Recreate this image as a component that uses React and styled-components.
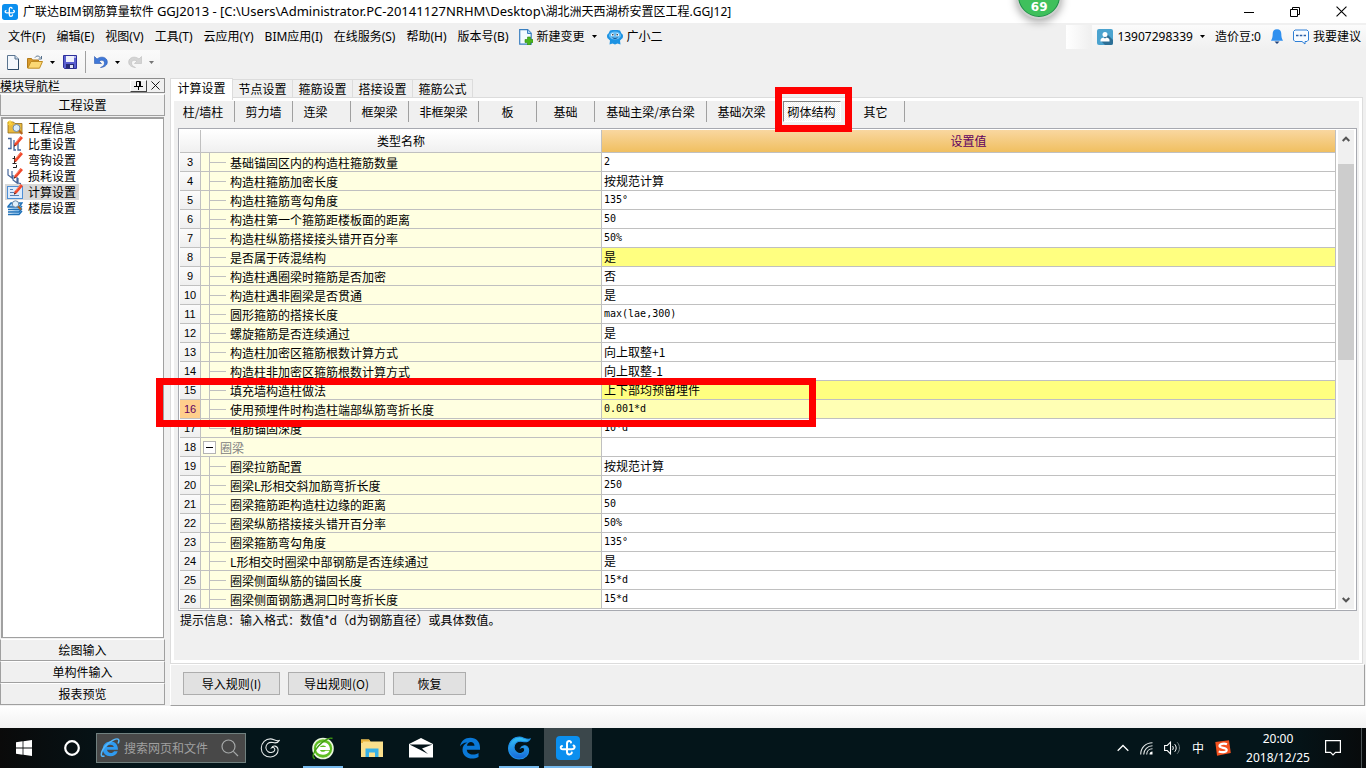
import React, { useState } from 'react'
import styled, { createGlobalStyle } from 'styled-components'

const menus = ['文件(F)', '编辑(E)', '视图(V)', '工具(T)', '云应用(Y)', 'BIM应用(I)', '在线服务(S)', '帮助(H)', '版本号(B)']

const mainTabs = ['计算设置', '节点设置', '箍筋设置', '搭接设置', '箍筋公式']

const memberTabs = [
  { name: '柱/墙柱', width: 57, space: '6px' },
  { name: '剪力墙' },
  { name: '连梁', space: '12px' },
  { name: '框架梁' },
  { name: '非框架梁', width: 70 },
  { name: '板' },
  { name: '基础' },
  { name: '基础主梁/承台梁', width: 112 },
  { name: '基础次梁', width: 70 },
  { name: '砌体结构', width: 70, marked: true },
  { name: '其它' },
]

const rows = [
  { no: 3, name: '基础锚固区内的构造柱箍筋数量', value: '2' },
  { no: 4, name: '构造柱箍筋加密长度', value: '按规范计算' },
  { no: 5, name: '构造柱箍筋弯勾角度', value: '135°' },
  { no: 6, name: '构造柱第一个箍筋距楼板面的距离', value: '50' },
  { no: 7, name: '构造柱纵筋搭接接头错开百分率', value: '50%' },
  { no: 8, name: '是否属于砖混结构', value: '是', color: '#ffff80' },
  { no: 9, name: '构造柱遇圈梁时箍筋是否加密', value: '否' },
  { no: 10, name: '构造柱遇非圈梁是否贯通', value: '是' },
  { no: 11, name: '圆形箍筋的搭接长度', value: 'max(lae,300)' },
  { no: 12, name: '螺旋箍筋是否连续通过', value: '是' },
  { no: 13, name: '构造柱加密区箍筋根数计算方式', value: '向上取整+1' },
  { no: 14, name: '构造柱非加密区箍筋根数计算方式', value: '向上取整-1' },
  { no: 15, name: '填充墙构造柱做法', value: '上下部均预留埋件', color: '#ffff80' },
  { no: 16, name: '使用预埋件时构造柱端部纵筋弯折长度', value: '0.001*d', color: '#ffffb4', current: true },
  { no: 17, name: '植筋锚固深度', value: '10*d', last: true },
  { no: 18, name: '圈梁', value: '', group: true },
  { no: 19, name: '圈梁拉筋配置', value: '按规范计算' },
  { no: 20, name: '圈梁L形相交斜加筋弯折长度', value: '250' },
  { no: 21, name: '圈梁箍筋距构造柱边缘的距离', value: '50' },
  { no: 22, name: '圈梁纵筋搭接接头错开百分率', value: '50%' },
  { no: 23, name: '圈梁箍筋弯勾角度', value: '135°' },
  { no: 24, name: 'L形相交时圈梁中部钢筋是否连续通过', value: '是' },
  { no: 25, name: '圈梁侧面纵筋的锚固长度', value: '15*d' },
  { no: 26, name: '圈梁侧面钢筋遇洞口时弯折长度', value: '15*d' },
]

const isLatin = (text) => /^[\x20-\xff]*$/.test(text)

/* ---------- icons ---------- */

const AppIcon = ({ size }) => (
  <svg width={size} height={size} viewBox="0 0 24 24">
    <rect width="24" height="24" rx="4" fill="#0b8fef" />
    <path d="M15 6.500c-.3-2.300-4-2-4 1v8.500c0 3.200 4.500 3 4.800.5M6 10c-2 .6-1.700 3.200.8 3.200h9c3 0 3.600-2.800 1.700-3.700" fill="none" stroke="#fff" strokeWidth="2" strokeLinecap="round" />
  </svg>
)

const NewFileIcon = () => (
  <svg width="12" height="15" viewBox="0 0 12 15">
    <path d="M.5.5h7.500l3.500 3.500v10.500H.5z" fill="#f4f8fd" stroke="#5b7590" />
    <path d="M11.500 4v10.500H1" fill="none" stroke="#2d4a68" />
    <path d="M8 .5V4h3.500" fill="#c9d9ea" stroke="#5b7590" />
  </svg>
)

const OpenIcon = () => (
  <svg width="16" height="14" viewBox="0 0 16 14">
    <path d="M.5 13V3.500h4l1 1.500h6v3" fill="#d99a2b" stroke="#b27a1a" />
    <path d="M.8 13.200 4 6.500h11.500l-3 6.700z" fill="#fbd873" stroke="#c08c22" />
    <path d="M8 2.500c1.500-2 4-2 5.500.5M14.500 1v3h-3" fill="none" stroke="#55708c" />
  </svg>
)

const SaveIcon = () => (
  <svg width="14" height="14" viewBox="0 0 14 14">
    <path d="M.5.5h13v13h-12l-1-1z" fill="#5a5fd0" stroke="#2c2f9a" />
    <rect x="3" y="1" width="8" height="6" fill="#eef0fb" />
    <rect x="11.500" y="1" width="1" height="2" fill="#fff" />
    <rect x="3" y="9" width="8" height="4.500" fill="#262a75" />
    <rect x="7" y="10" width="3" height="3" fill="#e3e5f5" />
  </svg>
)

const UndoIcon = ({ color, light, flip }) => (
  <svg width="14" height="14" viewBox="0 0 14 14">
    <g transform={flip ? 'translate(14 0) scale(-1 1)' : undefined}>
      <path d="M.5 1.500v7h7l-2.300-2.300c2.600-2 5.300-.6 5.300 1.800 0 2-1.500 3.500-4 4.500 4-.3 6.800-2.200 6.800-5.500 0-4.800-6.300-6.500-10.300-3z" fill={color} stroke={light} strokeWidth=".6" />
    </g>
  </svg>
)

const Caret = ({ color = '#000' }) => (
  <svg width="5" height="3" viewBox="0 0 5 3"><path d="M0 0h5L2.500 3z" fill={color} /></svg>
)

const NewChangeIcon = () => (
  <svg width="14" height="16" viewBox="0 0 14 16">
    <path d="M.7.7h8l3.500 3.500v11H.7z" fill="#f4fafe" stroke="#3a7fc0" strokeWidth="1.200" />
    <path d="M8.500.7V4.500h3.700" fill="#a9d2f3" stroke="#3a7fc0" />
    <path d="M8.500 8h3v2.500H14v3h-2.500V16h-3v-2.500H6v-3h2.500z" fill="#4bb51c" stroke="#2d8a0c" strokeWidth=".6" />
  </svg>
)

const RobotIcon = () => (
  <svg width="16" height="16" viewBox="0 0 16 16">
    <path d="M3 1.500 5.500 1h5l2.500.5 1.500 3c2 .8 2 4.500 0 5.500l-1.500 1.500.5 4-3-1-2.500 1-2.500-1-3 1 .5-4L1.500 10c-2-1-2-4.700 0-5.500z" fill="#1d93e3" />
    <ellipse cx="8" cy="6.500" rx="6" ry="4" fill="#67bdf3" />
    <circle cx="5.500" cy="5.800" r="1.500" fill="#fff" /><circle cx="10.500" cy="5.800" r="1.500" fill="#fff" />
    <circle cx="5.800" cy="5.800" r=".8" fill="#123" /><circle cx="10.200" cy="5.800" r=".8" fill="#123" />
    <path d="M5.500 8.300c1 1.500 4 1.500 5 0" fill="none" stroke="#0c4c86" />
  </svg>
)

const UserIcon = () => (
  <svg width="16" height="16" viewBox="0 0 16 16">
    <rect width="16" height="16" rx="2" fill="#4ba3cf" />
    <path d="m10 5 6 6v3a2 2 0 0 1-2 2H8l-4-4z" fill="#2d6f96" />
    <circle cx="8" cy="5.500" r="2.500" fill="#fff" />
    <path d="M3.500 12.500v-1.500c0-1.500 2-2.500 3-2.500l1.500 1 1.500-1c1 0 3 1 3 2.500v1.500z" fill="#fff" />
  </svg>
)

const BellIcon = () => (
  <svg width="12" height="15" viewBox="0 0 12 15">
    <path d="M6 .3c3 0 4.300 2 4.300 4.500 0 3 .4 4.500 1.700 7H0c1.300-2.500 1.700-4 1.700-7C1.700 2.300 3 .3 6 .3z" fill="#3090ef" />
    <path d="M3.500 12.500h5L6 15z" fill="#1c3f78" />
  </svg>
)

const ChatIcon = () => (
  <svg width="16" height="16" viewBox="0 0 16 16">
    <path d="M2 1h12l1.500 1.500V11L14 12.500h-2V15l-3-2.500H2L.5 11V2.500z" fill="#f7fbff" stroke="#2e7fd6" />
    <path d="M3 6.500h2.500M6.800 6.500h2.500M10.600 6.500H13" stroke="#2a5fa8" strokeWidth="1.400" />
  </svg>
)

const PinIcon = () => (
  <svg width="9" height="9" viewBox="0 0 9 9"><path d="M2.500 5V.5h4V5M5.500.5V5M0 5.500h9M4.500 5.500V9" fill="none" stroke="#000" /></svg>
)

const CloseIcon = ({ size }) => (
  <svg width={size} height={size} viewBox="0 0 10 10"><path d="m.5.5 9 9m0-9-9 9" stroke="#000" fill="none" /></svg>
)

const Pencil = () => (
  <>
    <path d="M13.500 0 16 2 9.500 9.500 7 10.500l.5-3z" fill="#f0472a" />
    <path d="M13.500.8 8.500 7" stroke="#ff9c80" strokeWidth=".8" />
    <path d="m7 10.500.4-2 1.500 1.300z" fill="#3b1c12" />
  </>
)

const sideItems = [
  {
    name: '工程信息',
    icon: (
      <>
        <path d="M1 2h5.500L8 3.500h7v9.500H1z" fill="#e9b93e" stroke="#8f6a1a" strokeWidth=".8" />
        <path d="M3 0v6M0 3h6M1 1l4 4M5 1 1 5" stroke="#ffd83a" strokeWidth=".9" />
        <circle cx="9.500" cy="8" r="3.500" fill="#d9ecfb" stroke="#6d8aa8" />
        <path d="m12 10.500 3.300 3.500" stroke="#b5651d" strokeWidth="2" />
      </>
    ),
  },
  {
    name: '比重设置',
    icon: (
      <>
        <path d="M1 2.500h3v10H1M9 14h-2V4M11 7v7h3" fill="none" stroke="#46669a" strokeWidth="1.300" />
        <Pencil />
      </>
    ),
  },
  {
    name: '弯钩设置',
    icon: (
      <>
        <path d="M7.500 4v8M5.500 6.500h4M5.500 11.500h4M6 15.500h3.500V13" fill="none" stroke="#222" />
        <Pencil />
      </>
    ),
  },
  {
    name: '损耗设置',
    icon: (
      <>
        <path d="M1 1v6l4 3V3M6 7v5l4 3V9M11 10v5l3 .5" fill="none" stroke="#46669a" strokeWidth="1.200" />
        <Pencil />
      </>
    ),
  },
  {
    name: '计算设置',
    icon: (
      <>
        <rect x=".5" y="2.500" width="15" height="12" fill="#dcebfc" stroke="#4e8fd6" />
        <path d="M3 5.500h3M3 8.500h4M3 11.500h9" stroke="#5a7fb0" />
        <Pencil />
      </>
    ),
  },
  {
    name: '楼层设置',
    icon: (
      <>
        <path d="M1 6.500 4 3h11l-3 4H1zM1 9.500h11l3-3.500M1 12h11l3-3.500M1 14.500h11l3-3.500" fill="#a9d3f6" stroke="#1e70b8" strokeWidth="1.400" />
        <circle cx="8.500" cy="4" r="3.200" fill="#e2f1fc" stroke="#6d8aa8" />
        <path d="m11 6.500 3 3" stroke="#b5651d" strokeWidth="2" />
      </>
    ),
  },
]

const Chevron = ({ down }) => (
  <svg width="8" height="6" viewBox="0 0 8 6">
    <path d={down ? 'M.7 1 4 4.300 7.300 1' : 'M.7 5 4 1.700 7.300 5'} fill="none" stroke="#555" strokeWidth="2" />
  </svg>
)

const IeIcon = () => (
  <svg width="20" height="20" viewBox="0 0 20 20">
    <path d="M18 11.800H7c.3 3.600 5.600 4.200 7 1.400h3.700c-1 3.300-3.800 5-7.200 5C5.800 18.200 2.800 15.200 2.800 11S5.800 3.500 10.600 3.500c4.700 0 7.500 3.300 7.400 8.300zM7 9h6.800c-.4-3-6.400-3-6.800 0z" fill="#2f9bf0" />
    <path d="M4.500 17.800C0 20.300.2 14 5.500 8 10 3 17-.5 18.500 1.500c.8 1 .3 2.500-.5 4" fill="none" stroke="#55b7fa" strokeWidth="1.500" />
  </svg>
)

const SearchIcon = () => (
  <svg width="18" height="18" viewBox="0 0 18 18"><circle cx="7.500" cy="7.500" r="6.500" fill="none" stroke="#a5a8a8" strokeWidth="1.200" /><path d="m12.300 12.300 4.700 4.700" stroke="#a5a8a8" strokeWidth="1.200" /></svg>
)

const WinIcon = () => (
  <svg width="16" height="16" viewBox="0 0 16 16"><path d="M0 2.200 6.600 1.300v6.200H0zM7.400 1.200 16 0v7.500H7.400zM0 8.400h6.600v6.300L0 13.800zM7.400 8.400H16V16l-8.600-1.200z" fill="#fff" /></svg>
)

const CortanaIcon = () => (
  <svg width="16" height="16" viewBox="0 0 16 16"><circle cx="8" cy="8" r="6.800" fill="none" stroke="#fff" strokeWidth="2.200" /></svg>
)

const swirl = 'M22 3c-1.500 2.500-4 3-7 2.300C9.800 4 6.500 7.500 6.800 11.500c.4 4 4 5.800 7.200 5 2.700-.7 3.400-2.700 2.800-4.300-.6-1.300-2.300-1.600-3.600-.8 1.700-3.400 7-2.600 7.500 1.600.6 4.900-3.400 8.700-8.400 8.900C6 22 1.200 17.500 1.500 11.500 1.800 5.500 6.300 1 12 1c3.500 0 6 3 10 2z'

const SpiralIcon = () => (
  <svg width="20" height="20" viewBox="0 0 23 23"><path d={swirl} fill="none" stroke="#e8ecec" strokeWidth="1.200" /></svg>
)

const GlodonIcon = () => (
  <svg width="24" height="24" viewBox="0 0 23 23">
    <defs><linearGradient id="sw" x1="0" y1="0" x2="0" y2="1"><stop offset="0" stopColor="#35c4f4" /><stop offset="1" stopColor="#1667d8" /></linearGradient></defs>
    <path d={swirl} fill="url(#sw)" stroke="#1f92ea" />
  </svg>
)

const BrowserIcon = () => (
  <svg width="24" height="24" viewBox="0 0 24 24">
    <circle cx="12" cy="12.500" r="10" fill="#5fbe22" stroke="#e9f7dc" strokeWidth="1.600" />
    <path d="M19 14H9c.5 2.200 4.400 2.400 5.500.8h4c-1 2.700-3.500 4-6.500 4-4.200 0-7-2.400-7-6.200S7.800 6.200 12 6.200s7.100 3 7 7.800zM9 11h6c-.6-2-5.400-2-6 0z" fill="#fff" />
    <path d="M4 22.500C.5 22 2 16 7.500 10 12 5 18 1 21.500 2.500" fill="none" stroke="#3f9d12" strokeWidth="1.400" />
  </svg>
)

const FolderIcon = () => (
  <svg width="22" height="20" viewBox="0 0 22 20">
    <path d="M0 1.500h8l1.500 2H22V19H0z" fill="#fbe08c" />
    <path d="M0 1.500h8l1.500 2H2v1.500H0z" fill="#e8b23b" />
    <path d="M4.500 19v-8.500h13V19h-3.500v-4.500H8V19z" fill="#38b1e7" />
  </svg>
)

const MailIcon = () => (
  <svg width="24" height="20" viewBox="0 0 24 20"><path d="M0 6 12 0l12 6v13.500H0z" fill="#fff" /><path d="M.5 6.500h23L13 10.500l6 5.500-9-4.700z" fill="#04141a" /></svg>
)

const EdgeIcon = () => (
  <svg width="22" height="22" viewBox="0 0 22 22">
    <path d="M1 9.500C2 4 6 .8 11.300.8c6 0 9.700 4 9.700 9.700v2.300H7.800c.2 5 7 6 11.700 3.200v4c-7.500 3.700-16 .5-16-7.300 0-3.500 2-6 4.800-7.300C4.500 5.500 2.200 7 1 9.500zm7-.8h7.500C15.300 3.900 8.600 3.800 8 8.700z" fill="#0a78d7" />
  </svg>
)

const UpIcon = () => (
  <svg width="12" height="8" viewBox="0 0 12 8"><path d="m.7 6.800 5.300-5.300 5.300 5.300" fill="none" stroke="#fff" strokeWidth="1.300" /></svg>
)

const WifiIcon = () => (
  <svg width="13" height="14" viewBox="0 0 13 14">
    <path d="M.7 13.500C.7 7 5.500 1.700 12.500 1.700M3.700 13.500c0-5 4-8.700 8.800-8.700M6.700 13.500c0-3.400 2.500-5.700 5.800-5.700" fill="none" stroke="#e4e8e8" strokeWidth="1.100" />
    <path d="M9.500 13.500c0-1.800 1.200-3 3-3v3z" fill="#fff" />
  </svg>
)

const VolumeIcon = () => (
  <svg width="17" height="14" viewBox="0 0 17 14">
    <path d="M.6 4.500h2.700L6.500 1.200v11.600L3.300 9.500H.6z" fill="none" stroke="#fff" strokeWidth="1.100" />
    <path d="M8.500 5c1 1 1 3 0 4M10.700 3.200c2 2 2 5.600 0 7.600" fill="none" stroke="#fff" />
    <path d="M13.200 1.300c3 3 3 8.400 0 11.400" fill="none" stroke="#7c888a" />
  </svg>
)

const SogouIcon = () => (
  <svg width="16" height="16" viewBox="0 0 16 16">
    <path d="M.3 2 14 .2 15.800 13 2 15.800z" fill="#f4511e" />
    <path d="M12 4.200C9 3 4.500 3.800 4.500 6s7.300 1.500 7.200 4-5 2.600-8 1.500" fill="none" stroke="#fff" strokeWidth="2.200" />
  </svg>
)

const NoticeIcon = () => (
  <svg width="16" height="16" viewBox="0 0 16 16"><path d="M.6.600h14.800v11.800H10.500L8 15l-2.500-2.600H.6z" fill="none" stroke="#fff" strokeWidth="1.200" /></svg>
)

/* ---------- page ---------- */

const App = () => {
  const [mainTab, setMainTab] = useState('计算设置')
  const [memberTab, setMemberTab] = useState('砌体结构')
  const [sideItem, setSideItem] = useState('计算设置')

  return (
    <Window>
      <GlobalStyle />
      <TitleBar>
        <AppIcon size={16} />
        <Title>广联达BIM钢筋算量软件 <FilePath>GGJ2013 - [C:\Users\Administrator.PC-20141127NRHM\Desktop\</FilePath>湖北洲天西湖桥安置区工程.GGJ12]</Title>
        <WindowButton aria-label="最小化"><svg width="10" height="10"><path d="M0 5.500h10" stroke="#000" /></svg></WindowButton>
        <WindowButton aria-label="还原"><svg width="10" height="10"><path d="M.5 2.500h7v7h-7zM2.500 2.500v-2h7v7h-2" fill="none" stroke="#000" /></svg></WindowButton>
        <WindowButton aria-label="关闭"><CloseIcon size={11} /></WindowButton>
        <SpeedBall>69</SpeedBall>
      </TitleBar>

      <MenuBar>
        <Menus>
          {menus.map((m) => <MenuItem key={m}>{m}</MenuItem>)}
        </Menus>
        <MenuItem $tight><NewChangeIcon />新建变更<CaretSpace><Caret /></CaretSpace></MenuItem>
        <MenuItem $tight><RobotIcon />广小二</MenuItem>
        <Blank />
        <Account>
          <MenuItem $tight><UserIcon />13907298339<CaretSpace><Caret /></CaretSpace></MenuItem>
          <MenuItem>造价豆:0</MenuItem>
          <MenuItem aria-label="消息"><BellIcon /></MenuItem>
          <MenuItem $tight><ChatIcon />我要建议</MenuItem>
        </Account>
      </MenuBar>

      <ToolBar>
        <Tools>
          <ToolButton aria-label="新建"><NewFileIcon /></ToolButton>
          <ToolButton aria-label="打开"><OpenIcon /><Caret /></ToolButton>
          <ToolButton aria-label="保存"><SaveIcon /></ToolButton>
          <ToolLine />
          <ToolButton aria-label="撤销"><UndoIcon color="#3f78d8" light="#2a58b0" /><Caret /></ToolButton>
          <ToolButton aria-label="重做"><UndoIcon color="#d4d4d4" light="#bdbdbd" flip /><Caret color="#777" /></ToolButton>
        </Tools>
      </ToolBar>

      <Workspace>
        <Sidebar>
          <SideHeader>
            <SideTitle>模块导航栏</SideTitle>
            <PinButton aria-label="固定"><PinIcon /></PinButton>
            <HeaderButton aria-label="关闭导航"><CloseIcon size={9} /></HeaderButton>
          </SideHeader>
          <SideButton>工程设置</SideButton>
          <SideList>
            {sideItems.map((item) => (
              <SideItem key={item.name} $active={sideItem === item.name} onClick={() => setSideItem(item.name)}>
                <svg width="16" height="16" viewBox="0 0 16 16">{item.icon}</svg>
                {item.name}
              </SideItem>
            ))}
          </SideList>
          <SideButton>绘图输入</SideButton>
          <SideButton>单构件输入</SideButton>
          <SideButton>报表预览</SideButton>
        </Sidebar>

        <Content>
          <MainTabs role="tablist">
            {mainTabs.map((t) => (
              <MainTab key={t} role="tab" $active={mainTab === t} onClick={() => setMainTab(t)}>{t}</MainTab>
            ))}
          </MainTabs>
          <Panel>
            <MemberTabs role="tablist">
              {memberTabs.map((t) => (
                <MemberSlot key={t.name} $width={t.width} $pressed={memberTab === t.name}>
                  <MemberTab role="tab" $space={t.space} $pressed={memberTab === t.name} onClick={() => setMemberTab(t.name)}>{t.name}</MemberTab>
                  {t.marked && <TabMark />}
                </MemberSlot>
              ))}
            </MemberTabs>
            <Grid>
              <Table>
                <colgroup>
                  <NoCol />
                  <NameCol />
                  <col />
                </colgroup>
                <thead>
                  <tr>
                    <HeadCell />
                    <HeadCell>类型名称</HeadCell>
                    <HeadCell $current>设置值</HeadCell>
                  </tr>
                </thead>
                <tbody>
                  {rows.map((r) => (
                    <tr key={r.no}>
                      <NoCell $current={r.current}>{r.no}</NoCell>
                      <NameCell>
                        <NameLine $group={r.group}>
                          {r.group ? <Toggle aria-label="折叠"><svg width="7" height="1"><path d="M0 .5h7" stroke="#000" /></svg></Toggle> : <Branch $last={r.last} />}
                          <NameText>{r.name}</NameText>
                        </NameLine>
                      </NameCell>
                      <ValueCell $color={r.color} $latin={isLatin(r.value)}>{r.value}</ValueCell>
                    </tr>
                  ))}
                </tbody>
              </Table>
              <ScrollBar>
                <ScrollButton aria-label="向上滚动"><Chevron /></ScrollButton>
                <ScrollTrack><ScrollThumb /></ScrollTrack>
                <ScrollButton aria-label="向下滚动"><Chevron down /></ScrollButton>
              </ScrollBar>
              <RowMark />
            </Grid>
            <Hint>提示信息：输入格式：数值*d（d为钢筋直径）或具体数值。</Hint>
          </Panel>
          <Actions>
            <ActionButton $wide>导入规则(I)</ActionButton>
            <ActionButton $wide>导出规则(O)</ActionButton>
            <ActionButton>恢复</ActionButton>
          </Actions>
        </Content>
      </Workspace>

      <StatusStrip />

      <TaskBar>
        <Task aria-label="开始"><WinIcon /></Task>
        <Task aria-label="Cortana"><CortanaIcon /></Task>
        <SearchBox>
          <IeIcon />
          <SearchInput aria-label="搜索" placeholder="搜索网页和文件" />
          <SearchIcon />
        </SearchBox>
        <Task aria-label="助手"><SpiralIcon /></Task>
        <TaskApps>
          <Task aria-label="浏览器" $open><BrowserIcon /></Task>
          <Task aria-label="文件夹"><FolderIcon /></Task>
          <Task aria-label="邮件"><MailIcon /></Task>
          <Task aria-label="Edge"><EdgeIcon /></Task>
          <Task aria-label="广联达" $open><GlodonIcon /></Task>
          <Task aria-label="钢筋算量" $active><AppIcon size={24} /></Task>
        </TaskApps>
        <Tray>
          <UpIcon />
          <WifiIcon />
          <VolumeIcon />
          <Ime>中</Ime>
          <SogouIcon />
          <Clock>
            <span>20:00</span>
            <span>2018/12/25</span>
          </Clock>
          <NoticeIcon />
        </Tray>
      </TaskBar>
    </Window>
  )
}

const GlobalStyle = createGlobalStyle`
  * { box-sizing: border-box; }
  body {
    margin: 0;
    background: #f0f0f0;
  }
  body, button, input {
    font-family: "Noto Sans CJK SC", sans-serif;
    font-size: 12px;
    line-height: 16px;
    color: #000;
  }
  button {
    padding: 0;
    border: 0;
    background: none;
    white-space: nowrap;
  }
  svg { display: block; flex: none; }
`

const uiFont = '"Noto Sans", "Noto Sans CJK SC", sans-serif'

const Window = styled.div`
  min-height: 100vh;
  display: flex;
  flex-direction: column;
  overflow: hidden;
`

const TitleBar = styled.header`
  position: relative;
  display: flex;
  align-items: center;
  height: 23px;
  padding: 0 2px;
  background: #fff;
`

const Title = styled.h1`
  flex: 1;
  margin: 0 0 0 5px;
  font: 12px/20px ${uiFont};
  white-space: nowrap;
`

const FilePath = styled.span`
  font-size: 13px;
`

const WindowButton = styled.button`
  display: flex;
  align-items: center;
  justify-content: center;
  width: 46px;
  height: 20px;
`

/* floats over the title bar, cut by the top edge of the screen */
const SpeedBall = styled.div`
  position: absolute;
  left: 76%;
  top: -27px;
  width: 46px;
  height: 46px;
  margin-left: -22px;
  padding-top: 24px;
  border: 2px solid #cfcfcf;
  border-radius: 50%;
  background: #3fc05c;
  box-shadow: inset 0 0 0 1px #1f8a4a, 0 3px 8px rgba(0, 0, 0, 0.35);
  color: #fff;
  font: bold 12px/16px "DejaVu Sans", sans-serif;
  text-align: center;
`

const MenuBar = styled.nav`
  display: flex;
  align-items: center;
  height: 27px;
  padding-left: 3px;
`

const Menus = styled.div`
  display: flex;
  gap: 1px;
`

const MenuItem = styled.button`
  display: flex;
  align-items: center;
  gap: ${(p) => (p.$tight ? '4px' : '6px')};
  height: 24px;
  padding: 0 5px;
  font-family: ${uiFont};
`

const CaretSpace = styled.span`
  padding-left: 3px;
`

const Blank = styled.div`
  width: 24px;
  height: 24px;
  margin-left: auto;
  background: linear-gradient(90deg, #fff, #f0f0f0);
`

const Account = styled.div`
  display: flex;
  height: 24px;
  margin-left: 2px;
  background: linear-gradient(#fbfbfb, #f0f0f0);
`

const ToolBar = styled.div`
  height: 28px;
`

const Tools = styled.div`
  display: flex;
  align-items: center;
  gap: 8px;
  width: 160px;
  height: 24px;
  padding-left: 7px;
  background: linear-gradient(#fafafa, #f3f3f3);
`

const ToolButton = styled.button`
  display: flex;
  align-items: center;
  gap: 7px;
`

const ToolLine = styled.div`
  width: 1px;
  height: 22px;
  background: #a0a0a0;
`

const Workspace = styled.main`
  flex: 1;
  display: flex;
  gap: 5px;
`

const Sidebar = styled.aside`
  display: flex;
  flex-direction: column;
  width: 165px;
  flex: none;
  padding-bottom: 1px;
`

const SideHeader = styled.div`
  display: flex;
  align-items: center;
  height: 15px;
  margin-bottom: 1px;
  border: 1px solid #8c8c8c;
  border-left: 0;
`

const SideTitle = styled.span`
  flex: 1;
  line-height: 13px;
`

const HeaderButton = styled.button`
  display: flex;
  align-items: center;
  justify-content: center;
  width: 17px;
  height: 12px;
`

const PinButton = styled(HeaderButton)`
  border: 1px solid #fff;
  border-right-color: #444;
  border-bottom-color: #444;
`

const SideButton = styled.button`
  height: 22px;
  flex: none;
  border: 1px solid #a0a0a0;
  border-top-color: #fff;
  background: #f0f0f0;
`

const SideList = styled.div`
  flex: 1;
  display: flex;
  flex-direction: column;
  align-items: flex-start;
  margin: 1px;
  padding: 1px 2px;
  border: 2px solid #a0a0a0;
  border-right-width: 1px;
  border-bottom-width: 1px;
  background: #fff;
`

const SideItem = styled.button`
  display: flex;
  gap: 5px;
  height: 16px;
  padding: 0 3px 0 2px;
  background: ${(p) => (p.$active ? '#d9d9d9' : 'none')};
`

const Content = styled.section`
  flex: 1;
  min-width: 0;
  display: flex;
  flex-direction: column;
  padding-right: 1px;
`

const MainTabs = styled.div`
  display: flex;
  align-items: flex-end;
  height: 19px;
`

const MainTab = styled.button`
  position: relative;
  height: ${(p) => (p.$active ? '22px' : '18px')};
  width: ${(p) => (p.$active ? '63px' : '60px')};
  margin-bottom: ${(p) => (p.$active ? '-3px' : '0')};
  padding-bottom: ${(p) => (p.$active ? '3px' : '0')};
  border: 1px solid #dcdcdc;
  border-bottom: 0;
  border-left-width: ${(p) => (p.$active ? '1px' : '0')};
  background: ${(p) => (p.$active ? '#fff' : '#f0f0f0')};
`

const Panel = styled.div`
  flex: 1;
  display: flex;
  flex-direction: column;
  margin-right: 2px;
  padding: 0 5px 0 7px;
  border: 1px solid #dcdcdc;
  box-shadow: inset 0 0 0 3px #fff;
`

const MemberTabs = styled.div`
  display: flex;
  height: 30px;
  padding: 3px 0 6px;
`

const MemberSlot = styled.div`
  position: relative;
  display: flex;
  justify-content: center;
  width: ${(p) => p.$width || 58}px;
  border-right: 1px solid ${(p) => (p.$pressed ? 'transparent' : '#a0a0a0')};
`

const MemberTab = styled.button`
  width: ${(p) => (p.$pressed ? '58px' : '100%')};
  height: 21px;
  padding-right: ${(p) => p.$space || '0'};
  border: 1px solid transparent;
  line-height: 18px;
  ${(p) => p.$pressed && `
    border-color: #808080 #fff #fff #808080;
    background: repeating-conic-gradient(#fff 0 25%, #f0f0f0 0 50%) 0 0 / 2px 2px;
  `}
`

/* red marker drawn over the member tab */
const TabMark = styled.div`
  position: absolute;
  z-index: 1;
  inset: -14px -6px -10px -2px;
  border: 7px solid #f00;
  pointer-events: none;
`

const Grid = styled.div`
  position: relative;
  display: flex;
  padding: 1px;
  border: 1px solid #a7a9b0;
  background: #fff;
`

const RowMark = styled.div`
  position: absolute;
  left: -23px;
  top: 249px;
  width: 660px;
  height: 49px;
  border: 7px solid #f00;
  pointer-events: none;
`

const Table = styled.table`
  flex: 1;
  table-layout: fixed;
  border-collapse: separate;
  border-spacing: 0;

  td, th {
    height: 19px;
    padding: 0;
    border-right: 1px solid #c0c0c0;
    border-bottom: 1px solid #c0c0c0;
    font-weight: normal;
  }
`

const NoCol = styled.col`
  width: 21px;
`

const NameCol = styled.col`
  width: 401px;
`

const HeadCell = styled.th`
  && { height: 23px; }
  background: ${(p) => (p.$current ? 'linear-gradient(#f9d7a0, #f0bf60)' : 'linear-gradient(#fff, #f0f0f0)')};
  color: ${(p) => (p.$current ? '#600060' : '#000')};
`

const NoCell = styled.td`
  background: ${(p) => (p.$current ? '#ffcf8c' : 'linear-gradient(#fbfbfb, #efefef)')};
  color: ${(p) => (p.$current ? '#600060' : '#000')};
  font: 11px/18px "Liberation Sans", sans-serif;
  text-align: center;
`

const NameCell = styled.td`
  background: #ffffe1;
`

const NameLine = styled.div`
  display: flex;
  align-items: center;
  gap: 4px;
  height: 18px;
  padding-left: ${(p) => (p.$group ? '2px' : '8px')};
  color: ${(p) => (p.$group ? '#808080' : '#000')};
`

const NameText = styled.span`
  padding-top: 2px;
`

const Branch = styled.span`
  width: 17px;
  height: 18px;
  background:
    linear-gradient(#c0c0c0, #c0c0c0) 0 0 / 1px ${(p) => (p.$last ? '9px' : '100%')} no-repeat,
    linear-gradient(#c0c0c0, #c0c0c0) 0 9px / 17px 1px no-repeat;
`

const Toggle = styled.button`
  display: flex;
  align-items: center;
  justify-content: center;
  width: 13px;
  height: 13px;
  border: 1px solid #b4b4b4;
  background: #fff;
`

const ValueCell = styled.td`
  && { padding-left: 2px; }
  background: ${(p) => p.$color || '#fff'};
  font: ${(p) => (p.$latin ? '10px/18px "DejaVu Sans Mono", monospace' : '12px/18px "Noto Sans CJK SC", sans-serif')};
`

const ScrollBar = styled.div`
  display: flex;
  flex-direction: column;
  width: 16px;
  margin: 0 1px 0 2px;
  background: #f0f0f0;
`

const ScrollButton = styled.button`
  display: flex;
  align-items: center;
  justify-content: center;
  height: 18px;
`

const ScrollTrack = styled.div`
  flex: 1;
  padding-top: 16px;
`

const ScrollThumb = styled.div`
  height: 46%;
  background: #cdcdcd;
`

const Hint = styled.p`
  flex: 1;
  margin: 0;
  padding: 0 2px;
  line-height: 18px;
`

const Actions = styled.div`
  display: flex;
  gap: 8px;
  height: 42px;
  padding: 7px 12px;
  border: 1px solid #a0a0a0;
  border-top-color: #fff;
  border-left-color: #fff;
`

const ActionButton = styled.button`
  width: ${(p) => (p.$wide ? '97px' : '73px')};
  height: 23px;
  border: 1px solid #adadad;
  background: #e1e1e1;
`

const StatusStrip = styled.div`
  height: 22px;
  background: linear-gradient(#fff, #f2f2f2);
`

const TaskBar = styled.footer`
  display: flex;
  height: 40px;
  background: linear-gradient(90deg, #0a0a0a, #04151a 10%, #04151a 94%, #080a0b);
`

const Task = styled.button`
  display: flex;
  align-items: center;
  justify-content: center;
  width: 48px;
  height: 40px;
  background: ${(p) => (p.$active ? '#3b474b' : 'none')};
  background: ${(p) => p.$open && 'linear-gradient(#76b9ed, #76b9ed) 4px 38px / 40px 2px no-repeat'};
  box-shadow: ${(p) => (p.$active ? 'inset 0 -2px #76b9ed' : 'none')};
`

const TaskApps = styled.div`
  display: flex;
  gap: 1px;
  margin-left: 5px;
`

const SearchBox = styled.div`
  display: flex;
  align-items: center;
  gap: 4px;
  width: 150px;
  height: 30px;
  margin-top: 5px;
  padding: 0 6px 0 3px;
  border: 1px solid #70807f;
  background: #484848;
`

const SearchInput = styled.input`
  flex: 1;
  min-width: 0;
  padding: 0;
  border: 0;
  outline: 0;
  background: none;
  color: #ddd;

  &::placeholder { color: #a0a0a0; }
`

const Tray = styled.div`
  display: flex;
  align-items: center;
  gap: 11px;
  margin-left: auto;
  margin-right: 4px;
  padding-right: 20px;
  border-right: 1px solid #4c5456;
`

const Ime = styled.span`
  color: #fff;
`

const Clock = styled.time`
  display: flex;
  flex-direction: column;
  align-items: center;
  width: 72px;
  font: 12px/19px ${uiFont};
  color: #fff;
`

export default App
